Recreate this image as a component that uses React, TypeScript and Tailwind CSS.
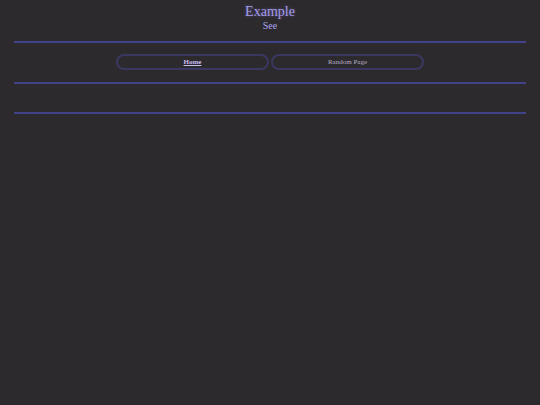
const Rule: React.FC = () => <div className="mx-[14px] h-[2px] bg-[#42428a]" />;

const App: React.FC = () => {
  return (
    <div className="min-h-[405px] bg-[#2d2a2e] font-['Liberation_Serif',serif]">
      <header className="flex flex-col items-center pt-[3px] pb-[9px]">
        <h1 className="text-[14px] leading-[17px] text-[#a49ce8] [text-shadow:0_0_3px_rgba(140,130,230,0.5)]">
          Example
        </h1>
        <p className="mt-0 text-[10px] leading-[12px] text-[#aaa4ee]">See</p>
      </header>
      <Rule />
      <nav className="flex justify-center gap-[2px] pt-[11px] pb-[12px]">
        <a className="flex h-[16px] w-[153px] items-center justify-center rounded-full border-2 border-[#3a3860] text-[7px] font-bold text-[#c8bcf0] underline">
          Home
        </a>
        <a className="flex h-[16px] w-[153px] items-center justify-center rounded-full border-2 border-[#3a3860] text-[7px] text-[#b3adc2]">
          Random Page
        </a>
      </nav>
      <Rule />
      <div className="h-[28px]" />
      <Rule />
    </div>
  );
};

export default App;
